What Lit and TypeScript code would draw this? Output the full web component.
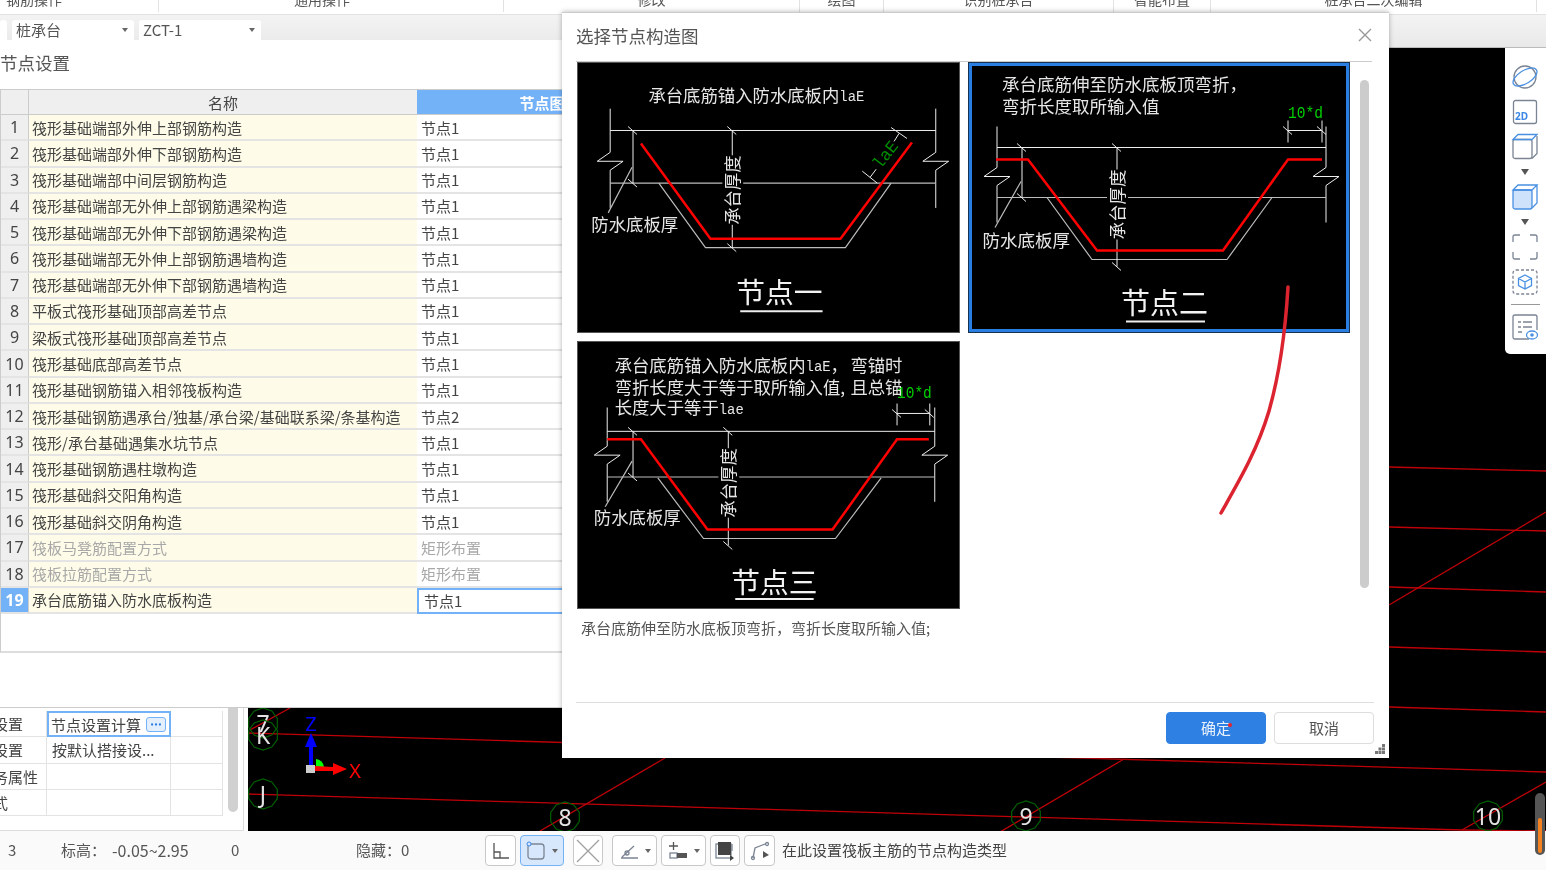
import {css, html, svg, LitElement, TemplateResult} from "lit";
import {customElement} from "lit/decorators.js";

interface Row {
    name: string;
    value: string;
    dim?: boolean;
}

const ROWS: Row[] = [
    {name: "筏形基础端部外伸上部钢筋构造", value: "节点1"},
    {name: "筏形基础端部外伸下部钢筋构造", value: "节点1"},
    {name: "筏形基础端部中间层钢筋构造", value: "节点1"},
    {name: "筏形基础端部无外伸上部钢筋遇梁构造", value: "节点1"},
    {name: "筏形基础端部无外伸下部钢筋遇梁构造", value: "节点1"},
    {name: "筏形基础端部无外伸上部钢筋遇墙构造", value: "节点1"},
    {name: "筏形基础端部无外伸下部钢筋遇墙构造", value: "节点1"},
    {name: "平板式筏形基础顶部高差节点", value: "节点1"},
    {name: "梁板式筏形基础顶部高差节点", value: "节点1"},
    {name: "筏形基础底部高差节点", value: "节点1"},
    {name: "筏形基础钢筋锚入相邻筏板构造", value: "节点1"},
    {name: "筏形基础钢筋遇承台/独基/承台梁/基础联系梁/条基构造", value: "节点2"},
    {name: "筏形/承台基础遇集水坑节点", value: "节点1"},
    {name: "筏形基础钢筋遇柱墩构造", value: "节点1"},
    {name: "筏形基础斜交阳角构造", value: "节点1"},
    {name: "筏形基础斜交阴角构造", value: "节点1"},
    {name: "筏板马凳筋配置方式", value: "矩形布置", dim: true},
    {name: "筏板拉筋配置方式", value: "矩形布置", dim: true},
    {name: "承台底筋锚入防水底板构造", value: "节点1"},
];

const RIBBON = [
    {label: "钢筋操作", cls: "r0"},
    {label: "通用操作", cls: "r1"},
    {label: "修改", cls: "r2"},
    {label: "绘图", cls: "r3"},
    {label: "识别桩承台", cls: "r4"},
    {label: "智能布置", cls: "r5"},
    {label: "桩承台二次编辑", cls: "r6"},
];

// grid bubble on the canvas, the original draws them as ten sided polygons
function bubble(cx: number, cy: number, label: string) {
    const pts: string[] = [];
    for (let i = 0; i < 10; i++) {
        const a = (Math.PI * 2 * i) / 10 + Math.PI / 10;
        pts.push(`${(cx + 15 * Math.cos(a)).toFixed(1)},${(cy + 15 * Math.sin(a)).toFixed(1)}`);
    }
    return svg`<polygon class="bubble" points=${pts.join(" ")}></polygon>
        <text class="axis-label" x=${cx} y=${cy}>${label}</text>`;
}

// vertical wall end with the break mark in the middle
function wall(x: number, top: number, breakY: number, bottom: number) {
    return svg`<polyline class="w" points="${x},${top} ${x},${breakY - 9} ${x - 13},${breakY} ${x + 13},${breakY} ${x},${breakY + 9} ${x},${bottom}"></polyline>`;
}

function tick(x: number, y: number) {
    return svg`<line class="w" x1=${x - 5} y1=${y - 4} x2=${x + 4} y2=${y + 4}></line>`;
}

// the parts every node drawing has: slab lines, thickness dimensions, labels
function slab(o: {
    left: number; right: number; top: number; low: number; wallTop: number; wallBottom: number; breakY: number;
    innerX: number; midX: number; labelX: number; labelY: number; textY: number; outer: string; bottom: number;
}) {
    return svg`
        ${wall(o.left, o.wallTop, o.breakY, o.wallBottom)}
        ${wall(o.right, o.wallTop, o.breakY, o.wallBottom)}
        <line class="w" x1=${o.left} y1=${o.top} x2=${o.right} y2=${o.top}></line>
        <line class="g" x1=${o.left} y1=${o.low} x2=${o.right} y2=${o.low}></line>
        <line class="w" x1=${o.innerX} y1=${o.top} x2=${o.innerX} y2=${o.low}></line>
        ${tick(o.innerX, o.top)}
        ${tick(o.innerX, o.low)}
        <line class="g" x1=${o.innerX - 1} y1=${o.low - 16} x2=${o.left - 2} y2=${o.low + 30}></line>
        <polyline class="g" points=${o.outer}></polyline>
        <line class="w" x1=${o.midX} y1=${o.top} x2=${o.midX} y2=${o.bottom}></line>
        ${tick(o.midX, o.top)}
        ${tick(o.midX, o.bottom)}
        <rect class="knock" x=${o.midX - 10} y=${o.textY - 35} width="21" height="70"></rect>
        <text class="cad" transform="rotate(-90 ${o.midX - 1} ${o.textY})" x=${o.midX - 1} y=${o.textY} text-anchor="middle">承台厚度</text>
        <text class="cad" x=${o.labelX} y=${o.labelY}>防水底板厚</text>`;
}

function caption(x: number, y: number, label: string, ux1: number, ux2: number, uy: number) {
    return svg`<text class="cad big" x=${x} y=${y}>${label}</text>
        <line class="u" x1=${ux1} y1=${uy} x2=${ux2} y2=${uy}></line>`;
}

function hookDim(x1: number, x2: number, top: number, textY: number) {
    return svg`
        <line class="w" x1=${x1} y1=${top} x2=${x1} y2=${top + 22}></line>
        <line class="w" x1=${x2} y1=${top} x2=${x2} y2=${top + 22}></line>
        <line class="w" x1=${x1} y1=${top + 10} x2=${x2} y2=${top + 10}></line>
        ${tick(x1, top + 10)}
        ${tick(x2, top + 10)}
        <text class="green" x=${x1} y=${textY} textLength="35" lengthAdjust="spacingAndGlyphs">10*d</text>`;
}

function nodeOne(): TemplateResult {
    return html`<svg class="node-svg" viewBox="577 62 383 271">
        <text class="cad" x="647.500" y="93.500">承台底筋锚入防水底板内<tspan class="mono" dy="3">laE</tspan></text>
        ${slab({left: 609, right: 937, top: 130, low: 183, wallTop: 108, wallBottom: 208, breakY: 161,
            innerX: 632, midX: 732, labelX: 590, labelY: 223.500, textY: 190,
            outer: "658,183 705,248 846,248 892,183", bottom: 248})}
        <polyline class="red" points="640,143 710,239 841,239 913,142"></polyline>
        <line class="w" x1="863" y1="171" x2="878" y2="183"></line>
        <line class="w" x1="871" y1="177" x2="877" y2="169"></line>
        <line class="w" x1="892" y1="127" x2="908" y2="138"></line>
        <line class="w" x1="900" y1="133" x2="895" y2="141"></line>
        <text class="dark-green" transform="rotate(-52 887 155)" x="887" y="155" text-anchor="middle">laE</text>
        ${caption(736, 291, "节点一", 740, 823, 312)}
    </svg>`;
}

function nodeTwo(): TemplateResult {
    return html`<svg class="node-svg" viewBox="972 67 374 262">
        <text class="cad" x="1002" y="83.500">承台底筋伸至防水底板顶弯折，</text>
        <text class="cad" x="1002" y="105.500">弯折长度取所输入值</text>
        ${hookDim(1288, 1322, 121, 114)}
        ${slab({left: 997, right: 1326, top: 148, low: 198, wallTop: 127, wallBottom: 223, breakY: 177,
            innerX: 1022, midX: 1117, labelX: 982.500, labelY: 239.500, textY: 205,
            outer: "1047,198 1092,260 1227,260 1272,198", bottom: 267})}
        <polyline class="red" points="996,160 1028,160 1097,251 1223,251 1288,160 1322,160"></polyline>
        ${caption(1121, 301, "节点二", 1126, 1205, 322)}
    </svg>`;
}

function nodeThree(): TemplateResult {
    return html`<svg class="node-svg" viewBox="577 341 383 268">
        <text class="cad" x="613.500" y="363.500">承台底筋锚入防水底板内<tspan class="mono" dy="3">laE</tspan><tspan dy="-3">，</tspan><tspan x="851">弯锚时</tspan></text>
        <text class="cad" x="613.500" y="385.500">弯折长度大于等于取所输入值,<tspan x="851">且总锚</tspan></text>
        <text class="cad" x="613.500" y="406.500">长度大于等于<tspan class="mono" dy="3">lae</tspan></text>
        ${hookDim(898, 931, 403, 393)}
        ${slab({left: 606, right: 936, top: 431, low: 477, wallTop: 407, wallBottom: 502, breakY: 455,
            innerX: 632, midX: 728, labelX: 592.500, labelY: 516.500, textY: 483,
            outer: "657,478 703,539 836,539 882,478", bottom: 546})}
        <polyline class="red" points="606,439 640,439 707,530 833,530 898,439 930,439"></polyline>
        ${caption(731, 581, "节点三", 735, 814, 600)}
    </svg>`;
}

@customElement("app-root")
export class AppRoot extends LitElement {
    private renderCanvas(): TemplateResult {
        return html`<svg class="cad-view" viewBox="248 48 1298 783">
            <line class="grid" x1="248" y1="733" x2="1546" y2="772"></line>
            <line class="grid" x1="248" y1="794" x2="1462" y2="830"></line>
            <line class="grid" x1="1462" y1="830" x2="1546" y2="831"></line>
            <line class="grid" x1="250" y1="730" x2="290" y2="708"></line>
            <line class="grid" x1="540" y1="831" x2="665" y2="758"></line>
            <line class="grid" x1="1000" y1="832" x2="1124" y2="759"></line>
            <line class="grid" x1="1462" y1="830" x2="1546" y2="782"></line>
            <line class="grid" x1="1389" y1="467" x2="1546" y2="471"></line>
            <line class="grid" x1="1389" y1="527" x2="1546" y2="531"></line>
            <line class="grid" x1="1389" y1="587" x2="1546" y2="592"></line>
            <line class="grid" x1="1389" y1="647" x2="1546" y2="652"></line>
            <line class="grid" x1="1389" y1="707" x2="1546" y2="712"></line>
            <line class="grid" x1="1389" y1="605" x2="1546" y2="512"></line>
            ${bubble(263, 723, "7")}
            ${bubble(263, 735, "K")}
            ${bubble(263, 794, "J")}
            ${bubble(565, 817, "8")}
            ${bubble(1026, 816, "9")}
            ${bubble(1488, 816, "10")}
            <path d="M316 759a9 9 0 0 1 8 8l-8 4z" fill="#0f0"></path>
            <rect x="309" y="745" width="4" height="20" fill="#00f"></rect>
            <polygon points="305,747 317,747 311,733" fill="#00f"></polygon>
            <polygon points="315,766 333,767 333,763 347,769 333,775 333,771 315,771" fill="#f00"></polygon>
            <rect x="306" y="765" width="9" height="8" fill="#ccc"></rect>
            <text class="axis-z" x="311" y="723">Z</text>
            <text class="axis-x" x="355" y="770">X</text>
        </svg>`;
    }

    private renderTools(): TemplateResult {
        return html`<div class="tools">
            <svg class="tool" viewBox="0 0 26 26">
                <circle class="ln" cx="13" cy="13" r="11"></circle>
                <ellipse class="bl" cx="13" cy="13" rx="13.500" ry="6.500" transform="rotate(-32 13 13)"></ellipse>
            </svg>
            <svg class="tool" viewBox="0 0 26 26">
                <rect class="ln" x="1.500" y="1.500" width="23" height="23" rx="2"></rect>
                <text class="tool-2d" x="3" y="21">2D</text>
            </svg>
            <svg class="tool" viewBox="0 0 26 26">
                <rect class="ln" x="1" y="5.500" width="19" height="19" rx="2"></rect>
                <path class="ln" d="M20 24.500l5-5V2"></path>
                <path class="bl" d="M1 5.500l5-5h19l-5 5z"></path>
            </svg>
            <span class="tri"></span>
            <svg class="tool" viewBox="0 0 26 26">
                <rect class="bl" x="1" y="6" width="19" height="19" rx="2" style="fill:#cfe2fb"></rect>
                <path class="bl" d="M20 24l5-5V1M1 6l5-5h19l-5 5z"></path>
            </svg>
            <span class="tri"></span>
            <svg class="tool" viewBox="0 0 26 26">
                <path class="ln" d="M1 8V3q0-2 2-2h5M18 1h5q2 0 2 2v5M25 18v5q0 2-2 2h-5M8 25H3q-2 0-2-2v-5"></path>
            </svg>
            <svg class="tool" viewBox="0 0 26 26">
                <rect class="ln dash" x="1" y="1" width="24" height="24" rx="3"></rect>
                <path class="bl" d="M13 6l6.500 3.500v7L13 20l-6.500-3.500v-7zM6.500 9.500L13 13l6.500-3.500M13 13v7"></path>
            </svg>
            <span class="tool-sep"></span>
            <svg class="tool" viewBox="0 0 26 26">
                <path class="ln" d="M17 25H3q-2 0-2-2V3q0-2 2-2h20q2 0 2 2v13"></path>
                <path class="ln" d="M6 8h3M11 8h9M6 13h3M11 13h9M6 18h4"></path>
                <ellipse class="bl" cx="20" cy="21" rx="5.500" ry="4"></ellipse>
                <circle cx="20" cy="21" r="1.800" fill="#4a90e2"></circle>
            </svg>
        </div>`;
    }

    private renderStatusButtons(): TemplateResult {
        return html`<div class="sbtns">
            <button class="sbtn w31">
                <svg viewBox="0 0 20 20"><path class="ln dark" d="M3 2v15h15M3 11h6v6"></path></svg>
            </button>
            <button class="sbtn w44 on">
                <svg viewBox="0 0 20 20"><rect class="ln" x="2" y="3" width="16" height="15" rx="3"></rect><circle class="dot" cx="3" cy="3" r="2"></circle></svg>
                <span class="caret"></span>
            </button>
            <button class="sbtn w30 far">
                <svg class="big-ico" viewBox="0 0 24 24"><path class="ln light" d="M1 1l22 22M23 1L1 23"></path></svg>
            </button>
            <button class="sbtn w45 far">
                <svg viewBox="0 0 20 20"><path class="ln" d="M2 17h17M3 16L15 5"></path><circle class="ln" cx="8" cy="12" r="2"></circle></svg>
                <span class="caret"></span>
            </button>
            <button class="sbtn w45">
                <svg viewBox="0 0 20 20"><path class="ln dark" d="M1 5h9M5.500 1v8"></path><rect x="2" y="12" width="7" height="5" class="ln"></rect><rect x="9" y="12" width="10" height="5" fill="#555"></rect></svg>
                <span class="caret"></span>
            </button>
            <button class="sbtn w30">
                <svg viewBox="0 0 20 20"><rect class="ln" x="1" y="3" width="15" height="14"></rect><rect x="3" y="1" width="13" height="13" fill="#444"></rect><path class="ln" d="M17 3v7"></path><path d="M15 14l4 3-4 3z" fill="#444"></path></svg>
            </button>
            <button class="sbtn w31">
                <svg viewBox="0 0 20 20"><path class="ln" d="M3 17l2-10 10-4"></path><circle class="ln" cx="3" cy="17" r="1.500"></circle><circle class="ln" cx="17" cy="3" r="1.500"></circle><path d="M13 10l6 4-6 3z" fill="#555"></path></svg>
            </button>
        </div>`;
    }

    private renderNodeDialog(): TemplateResult {
        return html`<section class="node-dialog">
            <div class="nd-title">节点设置</div>
            <div class="table">
                <div class="th num"></div>
                <div class="th">名称</div>
                <div class="th blue">节点图</div>
                ${ROWS.map((r, i) => {
                    const last = i === ROWS.length - 1;
                    return html`
                        <div class="num ${last ? "num-on" : ""}">${i + 1}</div>
                        <div class="name ${r.dim ? "dim" : ""}">${r.name}</div>
                        <div class="val ${r.dim ? "dim" : ""} ${last ? "val-on" : ""}">${r.value}</div>
                    `;
                })}
            </div>
        </section>`;
    }

    private renderPickDialog(): TemplateResult {
        return html`<section class="pick-dialog">
            <header class="pick-head">
                <span>选择节点构造图</span>
                <svg class="close" viewBox="0 0 14 14"><path d="M1 1l12 12M13 1L1 13"></path></svg>
            </header>
            <div class="pick-body">
                <div class="nodes">
                    <div class="node">${nodeOne()}</div>
                    <div class="node selected">${nodeTwo()}</div>
                    <div class="node">${nodeThree()}</div>
                </div>
                <div class="pick-scroll"></div>
            </div>
            <div class="desc">承台底筋伸至防水底板顶弯折，弯折长度取所输入值;</div>
            <footer class="pick-foot">
                <button class="btn primary">确定</button>
                <button class="btn">取消</button>
            </footer>
            <svg class="grip" viewBox="0 0 10 10"><path d="M7 0h3v3H7zM3.500 3.500h3v3h-3zM7 3.500h3v3H7zM0 7h3v3H0zM3.500 7h3v3h-3zM7 7h3v3H7z"></path></svg>
            <span class="red-dot"></span>
        </section>`;
    }

    protected render(): TemplateResult {
        return html`
            <div class="app">
                <div class="ribbon">
                    ${RIBBON.map((r) => html`<div class="rib ${r.cls}"><span>${r.label}</span></div>`)}
                </div>
                <div class="tabs">
                    <div class="combo stub"></div>
                    <div class="combo">桩承台<span class="caret"></span></div>
                    <div class="combo">ZCT-1<span class="caret"></span></div>
                </div>
                <div class="main">
                    <aside class="side">
                        <div class="props-wrap">
                            <div class="props">
                                <div class="pk"><span>设置</span></div>
                                <div class="pv pv-on">节点设置计算
                                    <svg class="more" viewBox="0 0 20 15">
                                        <circle cx="5.500" cy="7.500" r="1.300"></circle>
                                        <circle cx="10" cy="7.500" r="1.300"></circle>
                                        <circle cx="14.500" cy="7.500" r="1.300"></circle>
                                    </svg>
                                </div>
                                <div class="px"></div>
                                <div class="pk"><span>设置</span></div>
                                <div class="pv">按默认搭接设...</div>
                                <div class="px"></div>
                                <div class="pk"><span>务属性</span></div>
                                <div class="pv"></div>
                                <div class="px"></div>
                                <div class="pk"><span>式</span></div>
                                <div class="pv"></div>
                                <div class="px"></div>
                            </div>
                            <div class="side-scroll"></div>
                        </div>
                    </aside>
                    <div class="canvas">
                        ${this.renderCanvas()}
                        ${this.renderTools()}
                        <div class="slider"><span class="slider-fill"></span></div>
                    </div>
                </div>
                <div class="status">
                    <span class="s1">3</span>
                    <span class="s2">标高：</span>
                    <span class="s3">-0.05~2.95</span>
                    <span class="s4">0</span>
                    <span class="s5">隐藏：0</span>
                    ${this.renderStatusButtons()}
                    <span class="hint">在此设置筏板主筋的节点构造类型</span>
                </div>
            </div>
            ${this.renderNodeDialog()}
            ${this.renderPickDialog()}
            <svg class="scribble" viewBox="0 0 80 240">
                <path d="M69 6C67 40 63 84 50 130C38 170 20 200 2 232"></path>
            </svg>
        `;
    }

    static styles = css`
        :host {
            display: block;
            position: relative;
            width: 1546px;
            height: 870px;
            overflow: hidden;
            background: #fff;
            font-family: "Noto Sans CJK SC", "Noto Sans", sans-serif;
            color: #444;
            font-size: 15px;
            /* the reference is a slightly upscaled capture, everything is a bit soft */
            filter: blur(0.35px);
        }

        * {
            box-sizing: border-box;
        }

        .app {
            display: flex;
            flex-direction: column;
            height: 870px;
        }

        /* top ribbon, only the group captions are still visible */
        .ribbon {
            display: flex;
            flex: none;
            height: 14px;
            overflow: hidden;
            background: #fff;
        }

        .rib {
            display: flex;
            justify-content: center;
            flex: none;
            height: 12px;
            border-right: 1px solid #e2e2e2;
            font-size: 14px;
            line-height: 14px;
            color: #555;
        }

        .rib span {
            margin-top: -8px;
        }

        .r0 {
            width: 159px;
            padding-right: 90px;
        }

        .r1 {
            width: 345px;
            padding-right: 18px;
        }

        .r2 {
            width: 296px;
        }

        .r3 {
            width: 84px;
        }

        .r4 {
            width: 230px;
        }

        .r5 {
            width: 97px;
        }

        .r6 {
            width: 326px;
        }

        .tabs {
            display: flex;
            flex: none;
            gap: 5px;
            height: 34px;
            padding-top: 5px;
            background: linear-gradient(#f3f3f3, #e9e9e9);
            border-top: 1px solid #e2e2e2;
            border-bottom: 1px solid #bbb;
        }

        .combo {
            display: flex;
            align-items: center;
            justify-content: space-between;
            width: 122px;
            height: 21px;
            padding: 0 6px 2px 4px;
            background: #fff;
            border-radius: 3px 3px 0 0;
            font-size: 15px;
            color: #555;
        }

        .stub {
            width: 7px;
            padding: 0;
        }

        .caret {
            width: 0;
            height: 0;
            border-left: 3px solid transparent;
            border-right: 3px solid transparent;
            border-top: 4px solid #666;
        }

        .main {
            display: flex;
            flex: 1;
            min-height: 0;
        }

        .side {
            display: flex;
            flex: none;
            flex-direction: column;
            justify-content: flex-end;
            width: 248px;
            background: #fff;
        }

        .props-wrap {
            display: flex;
            gap: 5px;
            width: 244px;
            height: 123px;
            padding: 3px 0 14px;
            border-right: 1px solid #ddd;
            border-bottom: 1px solid #ddd;
        }

        .props {
            display: grid;
            flex: none;
            grid-template-columns: 47px 124px 52px;
            grid-auto-rows: 26.300px;
            width: 223px;
        }

        .props > div {
            display: flex;
            align-items: center;
            overflow: hidden;
            border-right: 1px solid #e3e3e3;
            border-bottom: 1px solid #e3e3e3;
            white-space: nowrap;
        }

        .pk span {
            margin-left: -7px;
        }

        .pv {
            padding-left: 5px;
        }

        .props .pv-on {
            justify-content: space-between;
            padding: 0 3px 0 2px;
            border: 2px solid #74b2f7;
        }

        .more {
            flex: none;
            width: 20px;
            height: 15px;
            background: #e4effd;
            border: 1px solid #74b2f7;
            border-radius: 3px;
            fill: #2a7de1;
        }

        .side-scroll {
            flex: none;
            width: 10px;
            height: 104px;
            margin-top: -3px;
            background: #d0d0d0;
            border-radius: 0 0 5px 5px;
        }

        .canvas {
            position: relative;
            flex: 1;
            background: #000;
        }

        .cad-view {
            display: block;
            width: 100%;
            height: 100%;
        }

        .grid {
            stroke: #c00008;
            stroke-width: 1.300;
        }

        .bubble {
            fill: none;
            stroke: #006000;
            stroke-width: 1.200;
        }

        .axis-label {
            fill: #e4e4e4;
            font-family: "Noto Sans", sans-serif;
            font-size: 23px;
            text-anchor: middle;
            dominant-baseline: central;
        }

        .axis-z,
        .axis-x {
            font-family: "Noto Sans", sans-serif;
            font-size: 20px;
            text-anchor: middle;
            dominant-baseline: central;
        }

        .axis-z {
            fill: #00f;
        }

        .axis-x {
            fill: #f00;
        }

        .tools {
            position: absolute;
            top: 0;
            right: 0;
            display: flex;
            flex-direction: column;
            align-items: center;
            gap: 9px;
            width: 41px;
            height: 306px;
            padding: 16px 1px 0 0;
            background: #fff;
            border-radius: 0 0 0 5px;
        }

        .tool {
            display: block;
            flex: none;
            width: 26px;
            height: 26px;
            overflow: visible;
        }

        .ln {
            fill: none;
            stroke: #7b8494;
            stroke-width: 1.300;
        }

        .ln.light {
            stroke: #a0a0a0;
        }

        .ln.dark {
            stroke: #555;
        }

        .bl {
            fill: none;
            stroke: #4a90e2;
            stroke-width: 1.300;
        }

        .dash {
            stroke-dasharray: 3 2;
        }

        .tool-2d {
            fill: #3b86e4;
            font-family: "Noto Sans", sans-serif;
            font-size: 10px;
            font-weight: 700;
        }

        .tri {
            flex: none;
            width: 0;
            height: 0;
            border-left: 4px solid transparent;
            border-right: 4px solid transparent;
            border-top: 6px solid #555;
        }

        .tool-sep {
            flex: none;
            width: 29px;
            height: 1px;
            background: #999;
        }

        .slider {
            position: absolute;
            right: 1px;
            bottom: -24px;
            display: flex;
            align-items: flex-end;
            justify-content: center;
            width: 10px;
            height: 62px;
            padding: 0 0 2px;
            background: #555;
            border-radius: 5px;
            z-index: 2;
        }

        .slider-fill {
            width: 4px;
            height: 35px;
            background: #f58220;
            border-radius: 2px;
        }

        .status {
            display: flex;
            flex: none;
            align-items: center;
            height: 39px;
            background: #fafafa;
            white-space: nowrap;
            font-size: 15px;
            color: #555;
        }

        .status > span {
            margin-bottom: 2px;
        }

        .s1 {
            width: 61px;
            padding-left: 8px;
        }

        .s2 {
            width: 51px;
        }

        .s3 {
            width: 119px;
            font-size: 16px;
        }

        .s4 {
            width: 125px;
        }

        .s5 {
            width: 129px;
        }

        .status .hint {
            margin-left: 7px;
            font-size: 15px;
            color: #444;
        }

        .sbtns {
            display: flex;
            gap: 4px;
        }

        .sbtn {
            display: flex;
            align-items: center;
            justify-content: center;
            gap: 6px;
            height: 31px;
            margin: 0;
            padding: 0;
            background: #fff;
            border: 1.500px solid #c8c8c8;
            border-radius: 4px;
        }

        .sbtn svg {
            width: 20px;
            height: 20px;
        }

        .sbtn .big-ico {
            width: 24px;
            height: 24px;
        }

        .w30 {
            width: 30px;
        }

        .w31 {
            width: 31px;
        }

        .w44 {
            width: 44px;
        }

        .w45 {
            width: 45px;
        }

        .far {
            margin-left: 5px;
        }

        .on {
            background: #d8e8fc;
            border-color: #74b2f7;
        }

        .dot {
            fill: #d8e8fc;
            stroke: #3b86e4;
            stroke-width: 1;
        }

        /* the settings dialog underneath the picker */
        .node-dialog {
            position: absolute;
            left: 0;
            top: 40px;
            width: 562px;
            height: 668px;
            overflow: hidden;
            background: #fff;
            border-bottom: 1px solid #ccc;
        }

        .nd-title {
            height: 49px;
            font-size: 17.500px;
            line-height: 46px;
            color: #555;
        }

        .table {
            display: grid;
            grid-template-columns: 27px 389px 250px;
            grid-template-rows: 25px;
            grid-auto-rows: 26.280px;
            width: 100%;
            height: 564px;
            border-top: 1px solid #ccc;
            border-left: 1px solid #ccc;
            border-bottom: 2px solid #ddd;
            overflow: hidden;
        }

        .table > div {
            display: flex;
            align-items: center;
            white-space: nowrap;
            border-bottom: 2px solid #e4e4e4;
        }

        .table > .th {
            justify-content: center;
            padding-top: 1px;
            background: #efefef;
            border-left: 1px solid #ccc;
            border-bottom: 1px solid #ccc;
        }

        .table > .th.num {
            border-left: 0;
        }

        .table > .blue {
            background: #74b2f7;
            color: #fff;
            font-weight: 700;
            border-left: 0;
        }

        .num {
            justify-content: center;
            background: #efefef;
            font-family: "Noto Sans", sans-serif;
            font-size: 16px;
        }

        .table .num-on {
            background: #74b2f7;
            color: #fff;
            font-weight: 700;
        }

        .name {
            padding-left: 3px;
            background: #fefce8;
            border-left: 1px solid #ccc;
        }

        .val {
            padding-left: 4px;
        }

        .table .dim {
            color: #a8a8a8;
        }

        .table .val-on {
            padding-left: 5px;
            border: 2px solid #74b2f7;
        }

        /* node picker */
        .pick-dialog {
            position: absolute;
            left: 562px;
            top: 12px;
            width: 827px;
            height: 746px;
            background: #fff;
            border-top: 1px solid #ccc;
            box-shadow: 0 0 5px rgba(0, 0, 0, 0.3);
        }

        .pick-head {
            display: flex;
            align-items: center;
            justify-content: space-between;
            height: 49px;
            margin: 0 17px 0 14px;
            padding-bottom: 4px;
            border-bottom: 1px solid #ccc;
            font-size: 17.500px;
            color: #555;
        }

        .close {
            width: 14px;
            height: 14px;
            margin-right: 0;
            fill: none;
            stroke: #999;
            stroke-width: 1.400;
        }

        .pick-body {
            display: flex;
            gap: 10px;
            height: 547px;
            padding-left: 15px;
        }

        .nodes {
            display: grid;
            flex: none;
            grid-template-columns: 383px 382px;
            grid-template-rows: 271px 268px;
            column-gap: 8px;
            row-gap: 8px;
            width: 773px;
        }

        .node {
            overflow: hidden;
            background: #000;
            border: 1px solid #555;
        }

        .selected {
            padding: 0;
            border: 4px solid #2a7de1;
            outline: 1px solid #16324f;
            outline-offset: -1px;
        }

        .node-svg {
            display: block;
            width: 100%;
            height: 100%;
        }

        .w {
            stroke: #eee;
            stroke-width: 1;
            fill: none;
        }

        .g {
            stroke: #bdbdbd;
            stroke-width: 1.200;
            fill: none;
        }

        .u {
            stroke: #eee;
            stroke-width: 2;
        }

        .red {
            fill: none;
            stroke: #f00;
            stroke-width: 2.500;
        }

        .knock {
            fill: #000;
        }

        .cad {
            fill: #e6e6e6;
            font-family: "Noto Sans CJK SC", sans-serif;
            font-size: 17.500px;
            dominant-baseline: central;
        }

        .big {
            font-size: 29px;
            fill: #f2f2f2;
        }

        .mono {
            font-family: "Liberation Mono", monospace;
            font-size: 14px;
        }

        .green,
        .dark-green {
            font-family: "Liberation Mono", monospace;
            dominant-baseline: central;
        }

        .green {
            fill: #00d000;
            font-size: 17px;
        }

        .dark-green {
            fill: #009000;
            font-size: 17px;
        }

        .pick-scroll {
            flex: none;
            width: 9px;
            height: 508px;
            margin-top: 18px;
            background: #ccc;
            border-radius: 5px;
        }

        .desc {
            height: 93px;
            padding: 8px 0 0 19px;
            font-size: 15px;
            line-height: 22px;
            color: #555;
        }

        .pick-foot {
            display: flex;
            justify-content: flex-end;
            gap: 8px;
            margin: 0 15px 0 14px;
            padding-top: 9px;
            border-top: 1.500px solid #ddd;
        }

        .btn {
            width: 100px;
            height: 32px;
            margin: 0;
            padding: 0 0 2px;
            background: #fff;
            border: 1.500px solid #ddd;
            border-radius: 4px;
            font-family: inherit;
            font-size: 15px;
            color: #555;
        }

        .primary {
            background: #2f80e3;
            border-color: #2f80e3;
            color: #e8f1fc;
        }

        .grip {
            position: absolute;
            right: 4px;
            bottom: 4px;
            width: 10px;
            height: 10px;
            fill: #777;
        }

        .red-dot {
            position: absolute;
            left: 666px;
            top: 710px;
            width: 4px;
            height: 4px;
            background: #e8202c;
            border-radius: 50%;
        }

        .scribble {
            position: absolute;
            left: 1219px;
            top: 281px;
            width: 80px;
            height: 240px;
            fill: none;
            stroke: #dc2430;
            stroke-width: 3.500;
            stroke-linecap: round;
        }
    `;
}
